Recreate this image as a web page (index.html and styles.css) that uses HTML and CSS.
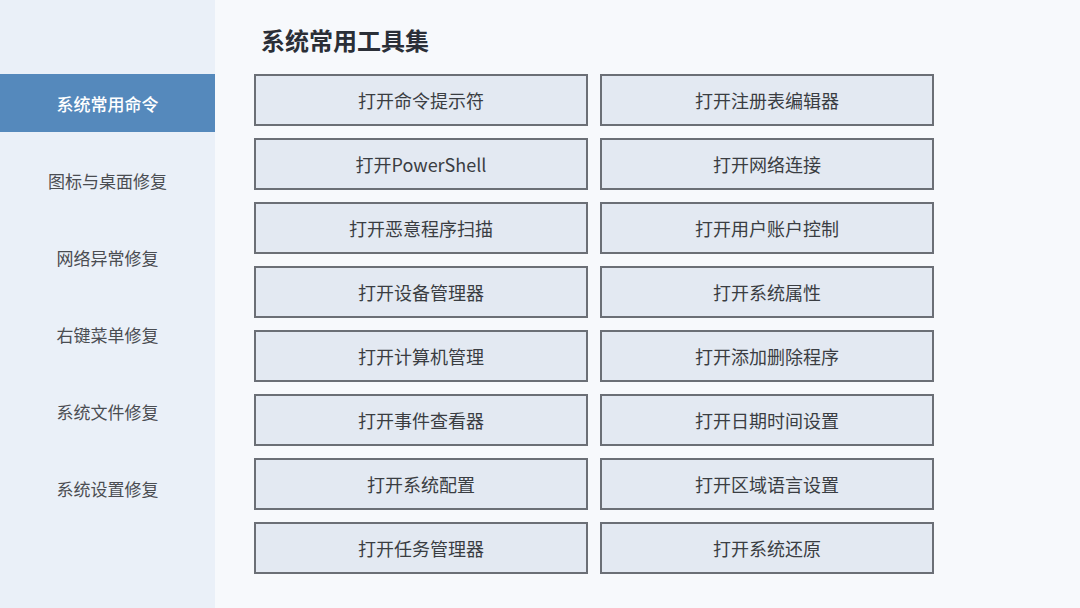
FILE: index.html
```html
<!DOCTYPE html>
<html lang="zh-CN">
<head>
<meta charset="utf-8">
<link rel="stylesheet" href="styles.css">
</head>
<body>
<div class="app">
  <nav class="sidebar">
    <div class="nav-item active">系统常用命令</div>
    <div class="nav-item">图标与桌面修复</div>
    <div class="nav-item">网络异常修复</div>
    <div class="nav-item">右键菜单修复</div>
    <div class="nav-item">系统文件修复</div>
    <div class="nav-item">系统设置修复</div>
  </nav>
  <main class="main">
    <h1 class="title">系统常用工具集</h1>
    <div class="grid">
      <div class="btn">打开命令提示符</div>
      <div class="btn">打开注册表编辑器</div>
      <div class="btn">打开PowerShell</div>
      <div class="btn">打开网络连接</div>
      <div class="btn">打开恶意程序扫描</div>
      <div class="btn">打开用户账户控制</div>
      <div class="btn">打开设备管理器</div>
      <div class="btn">打开系统属性</div>
      <div class="btn">打开计算机管理</div>
      <div class="btn">打开添加删除程序</div>
      <div class="btn">打开事件查看器</div>
      <div class="btn">打开日期时间设置</div>
      <div class="btn">打开系统配置</div>
      <div class="btn">打开区域语言设置</div>
      <div class="btn">打开任务管理器</div>
      <div class="btn">打开系统还原</div>
    </div>
  </main>
</div>
</body>
</html>
```

FILE: styles.css
```css
html, body {
  margin: 0;
  padding: 0;
  width: 1080px;
  height: 608px;
  overflow: hidden;
  font-family: "Noto Sans CJK SC", "Noto Sans", sans-serif;
}
.app {
  display: flex;
  width: 1080px;
  height: 608px;
  background: #f7f9fc;
}
.sidebar {
  width: 215px;
  flex: none;
  background: #eaf0f8;
  padding-top: 74px;
  display: flex;
  flex-direction: column;
  gap: 19.2px;
  box-sizing: border-box;
}
.nav-item {
  height: 58px;
  display: flex;
  align-items: center;
  justify-content: center;
  font-size: 17px;
  color: #4a4d52;
}
.nav-item.active {
  background: #5589bc;
  color: #ffffff;
  font-weight: 500;
}
.main {
  flex: 1;
  padding-left: 39px;
}
.title {
  margin: 0;
  height: 74px;
  box-sizing: border-box;
  padding-top: 24px;
  padding-left: 7px;
  font-size: 24px;
  line-height: 32px;
  font-weight: 700;
  color: #2b2f37;
}
.grid {
  display: grid;
  grid-template-columns: 334px 334px;
  grid-auto-rows: 52px;
  column-gap: 12px;
  row-gap: 12px;
}
.btn {
  box-sizing: border-box;
  border: 2px solid #6b6f76;
  background: #e3e9f2;
  display: flex;
  align-items: center;
  justify-content: center;
  font-size: 18px;
  color: #3a3d42;
}
```
